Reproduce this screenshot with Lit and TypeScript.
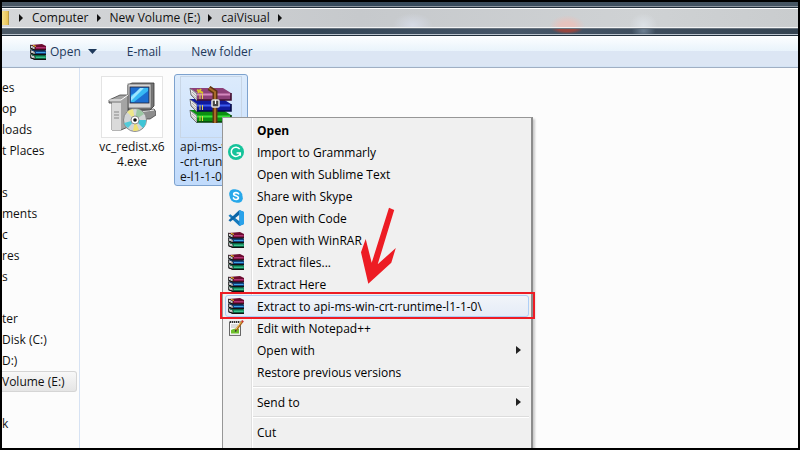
import { LitElement, html, css, svg, nothing } from "lit";
import { customElement, property } from "lit/decorators.js";

const smallBook = (y: number, cover: string, light: string) => svg`
  <path d="M.5 ${y} L5 ${y + 2} V${y + 5.2} L.5 ${y + 3.2}Z" fill="#fff" stroke="#111" stroke-width=".8"/>
  <path d="M1 ${y + 1.8} L5 ${y + 3.6}" stroke="#555" stroke-width=".5"/>
  <path d="M.5 ${y} L12 ${y - 1} L16 ${y + 1} V${y + 5} H5 V${y + 2}Z" fill="${cover}"/>
  <path d="M6 ${y + 2.8} H15.6" stroke="${light}" stroke-width="1"/>
  <path d="M.5 ${y + 3.4} L5 ${y + 5} H16" fill="none" stroke="#111" stroke-width="1.2"/>`;

const bigBook = (y: number, c: string, l: string, d: string) => svg`
  <path d="M1 ${y} L8 ${y + 6} V${y + 13} L2 ${y + 7}Z" fill="#e8e8e8" stroke="#555" stroke-width=".8"/>
  <path d="M3 ${y + 4} L8 ${y + 9} M2 ${y + 6} L8 ${y + 11}" stroke="#999" stroke-width=".7"/>
  <path d="M1 ${y} H34 L42 ${y + 5} V${y + 12} H8 V${y + 5}Z" fill="${c}"/>
  <path d="M8 ${y + 6.5} H42" stroke="${l}" stroke-width="2"/>
  <path d="M8 ${y + 12} H42 V${y + 5}" fill="none" stroke="${d}" stroke-width="1.6"/>
  <path d="M11 ${y + 6} V${y + 11} M13.5 ${y + 6} V${y + 11}" stroke="#e7d34a" stroke-width="1"/>`;

const icons = {
  rar: svg`${smallBook(10.4, "#0b7a52", "#4fe0a4")}${smallBook(5.7, "#12407c", "#3da4e4")}${smallBook(1, "#6d0b30", "#d04590")}<path d="M3 1.4 L6 2.4" stroke="#e8c91e"/>`,
  grammarly: svg`<circle cx="8" cy="8" r="8" fill="#15c39a"/><path d="M11.7 5.2 A4.6 4.6 0 1 0 12.2 9.4 M8.6 8.9 H12.3 V11.8" fill="none" stroke="#fff" stroke-width="1.5"/>`,
  skype: svg`<circle cx="5.8" cy="5.8" r="4.6" fill="#28a8ea"/><circle cx="10.2" cy="10.2" r="4.6" fill="#28a8ea"/><circle cx="8" cy="8" r="6.4" fill="#28a8ea"/><path d="M10.6 5.8 C9.8 4.3 5.7 4.2 5.7 6.2 C5.7 8.2 10.4 7.4 10.4 9.8 C10.4 12 6.2 12 5.4 10" fill="none" stroke="#fff" stroke-width="1.7" stroke-linecap="round"/>`,
  code: svg`<path d="M11.4 0 L16 2 V14 L11.4 16 L0.5 5.8 L2.3 4.3 L11.4 11.3Z" fill="#1479bd"/><path d="M11.4 0 V4.7 L2.3 11.8 L.5 10.3Z" fill="#0b65a7"/><path d="M11.4 0 L16 2 V14 L11.4 16Z" fill="#2aa2ea"/>`,
  notepad: svg`<rect x="1.5" y="2" width="11" height="13.4" fill="#fbfbfb" stroke="#666"/><path d="M2 2 H12" stroke="#333" stroke-width="2" stroke-dasharray="1 1"/><path d="M3 5 H10 M3 7 H9" stroke="#bbb"/><path d="M3 10 Q7 7.5 11 9 V13.5 H3Z" fill="#6fc02c"/><path d="M14.2 1.6 L8 10.2" stroke="#a8621c" stroke-width="2.2"/><path d="M13.8 1.2 L7.8 9.4" stroke="#ffd45a" stroke-width=".9"/><path d="M13.6 .6 L15.4 2" stroke="#c33" stroke-width="1.6"/><path d="M6.8 12 L7.2 9.6 L9 10.9Z" fill="#333"/>`,
};
type IconName = keyof typeof icons;
const icon = (name: IconName) =>
  html`<svg class="icon" viewBox="0 0 16 16" width="16" height="16" aria-hidden="true">${icons[name]}</svg>`;

const archiveArt = html`<svg viewBox="0 0 44 38" width="44" height="38" aria-hidden="true">
  ${bigBook(24, "#0c8f10", "#3be03a", "#063f08")}
  ${bigBook(13, "#101a9c", "#3d5cf0", "#050a44")}
  ${bigBook(2, "#8c3f78", "#d487bd", "#40102f")}
  <path d="M8 4 L14 7 M12 3 L9 7" stroke="#d8c22c" stroke-width="2"/>
  <path d="M20 2 L26 6 V37" fill="none" stroke="#5e3510" stroke-width="5"/>
  <path d="M20 2 L26 6 V37" fill="none" stroke="#a86a28" stroke-width="2"/>
  <rect x="23" y="14" width="7" height="7" rx="1" fill="#444" stroke="#ddd" stroke-width="1.6"/>
  <path d="M26.5 14 V18" stroke="#fff" stroke-width="1.2"/>
</svg>`;

const installerArt = html`<svg viewBox="0 0 48 50" width="48" height="50" aria-hidden="true">
  <path d="M20 31 L46 27 L48 30 V33 L42 37 H20Z" fill="#8d8d8d" stroke="#444" stroke-width=".8"/>
  <path d="M21 31 L46 28" stroke="#f4f4f4"/>
  <path d="M20 3 L24 1 H46 V24 L42 28 H20Z" fill="#777" stroke="#333" stroke-width=".8"/>
  <rect x="20" y="2" width="23" height="24" fill="#d5d5d5" stroke="#666" stroke-width=".8"/>
  <rect x="22" y="5" width="19" height="16" fill="#1d6fd1" stroke="#223" stroke-width=".8"/>
  <path d="M23 20 V13 L36 6 H40 V9 L26 20Z" fill="#37baf4"/>
  <path d="M23 15 L32 6 H36 L23 19Z" fill="#9be6ff"/>
  <path d="M1 18 L12 13 H20 V45 L13 48 H4 V21 H1Z" fill="#a4a4a4" stroke="#444" stroke-width=".8"/>
  <path d="M4 21 H13 V48 H4Z" fill="#dadada"/><path d="M1 18 H13 L20 13" fill="none" stroke="#fff"/>
  <path d="M6 30 H11 M6 33 H11 M6 36 H11" stroke="#888"/>
  <circle cx="27" cy="38" r="11.5" fill="#d2d5d6" stroke="#777" stroke-width=".8"/>
  <path d="M27 38 L19 30 A11 11 0 0 1 25 27Z" fill="#eee78a"/>
  <path d="M27 38 L29 27 A11 11 0 0 1 36 32Z" fill="#9cc9a4"/>
  <path d="M27 38 L38 38 A11 11 0 0 1 35 46Z" fill="#3fc5d6"/>
  <path d="M27 38 L16 41 A11 11 0 0 0 20 46Z" fill="#52cbd9"/>
  <path d="M27 38 L25 49 A11 11 0 0 0 31 48Z" fill="#efe16f"/>
  <circle cx="27" cy="38" r="4" fill="#fff" stroke="#777" stroke-width=".8"/><circle cx="27" cy="38" r="1.8" fill="#111"/>
</svg>`;

@customElement("path-bar")
class PathBar extends LitElement {
  static styles = css`
    :host { display: block; }
    .bar {
      display: flex; align-items: center; height: 18px;
      border-top: 1px solid #fff; border-bottom: 1px solid #f2f3f4;
      background:
        radial-gradient(ellipse 18px 12px at 71% 100%, #e6c3be 40%, #e6c3be00),
        radial-gradient(ellipse 14px 12px at 80.6% 90%, #dce1e6, #dce1e600),
        radial-gradient(ellipse 20px 12px at 51.6% 90%, #d5dae5, #d5dae500),
        linear-gradient(90deg, #d5d7d9, #c6c9cc 45%, #cfd2d4 80%, #c9ccce);
    }
    .under { height: 7px; box-sizing: border-box; border-top: 1px solid #69747f; border-bottom: 1px solid #b9c2cc;
      background:
        radial-gradient(ellipse 16px 5px at 71% 0, #96463f 50%, #96463f00),
        radial-gradient(ellipse 12px 8px at 80.6% 40%, #6d8093, #6d809300),
        linear-gradient(90deg, #4b5966, #334556 40%, #465668 65%, #344351); }
    .rule { height: 1px; background: #1f2d3a; }
    .top { height: 4px; background: linear-gradient(90deg, #4a5865, #34485a 45%, #465563); border-bottom: 1px solid #8d96a0; }
    .folder { flex: none; width: 7px; height: 14px; background: linear-gradient(90deg, #f4df8d, #e8c153); border-right: 1px solid #b89b45; box-sizing: border-box; }
    .crumb { border: 0; background: none; padding: 0 0 0 9px; font: inherit; color: #111; line-height: 18px; white-space: nowrap; }
    .arrow { flex: none; margin-left: 10px; }
    .crumb + .arrow { margin-left: 8px; }
  `;
  render() {
    const arrow = html`<svg class="arrow" width="4" height="8" viewBox="0 0 4 8" aria-hidden="true"><path d="M0 0 L4 4 L0 8Z" fill="#111"/></svg>`;
    return html`<div class="top"></div><div class="rule"></div>
      <nav class="bar" aria-label="Path"><span class="folder"></span>${arrow}
        ${["Computer", "New Volume (E:)", "caiVisual"].map((c) => html`<button class="crumb">${c}</button>${arrow}`)}
      </nav>
      <div class="under"></div><div class="rule"></div>`;
  }
}

interface Entry { label: string; icon?: IconName; bold?: boolean; more?: boolean; marked?: boolean; rule?: boolean; }
const entries: Entry[] = [
  { label: "Open", bold: true },
  { label: "Import to Grammarly", icon: "grammarly" },
  { label: "Open with Sublime Text" },
  { label: "Share with Skype", icon: "skype" },
  { label: "Open with Code", icon: "code" },
  { label: "Open with WinRAR", icon: "rar" },
  { label: "Extract files...", icon: "rar" },
  { label: "Extract Here", icon: "rar" },
  { label: "Extract to api-ms-win-crt-runtime-l1-1-0\\", icon: "rar", marked: true },
  { label: "Edit with Notepad++", icon: "notepad" },
  { label: "Open with", more: true },
  { label: "Restore previous versions" },
  { label: "Send to", more: true, rule: true },
  { label: "Cut", rule: true },
];

@customElement("context-menu")
class ContextMenu extends LitElement {
  static styles = css`
    :host {
      display: block; box-sizing: border-box; width: 311px; padding: 1px 2px 0;
      border: 1px solid #979797; border-right: 2px solid #8c8c8c; border-bottom: 0;
      background: linear-gradient(90deg, #f1f1f1 28px, #dfdfdf 28px, #dfdfdf 29px, #fff 29px, #fff 30px, #f0f0f0 30px);
      box-shadow: 2px 2px 2px #0003;
    }
    .item {
      position: relative; display: grid; grid-template-columns: 29px 1fr 12px; align-items: center;
      width: 100%; height: 22px; box-sizing: border-box; padding: 0 0 0 2px; border: 1px solid transparent;
      border-radius: 3px; background: none; font: inherit; color: #000; text-align: left; white-space: nowrap;
    }
    .icon, .more { display: block; }
    .bold { font-weight: 700; }
    .marked { border-color: #aecff7; background: linear-gradient(#f1f4f9, #e5ecf7); }
    .frame { position: absolute; inset: -4px -7px -3px -6px; border: 2px solid #ed1c24; }
    .rule { height: 1px; margin: 3px 0 3px 28px; border: 0; border-bottom: 1px solid #fff; background: #dcdcdc; }
  `;
  render() {
    return entries.map((e) => html`
      ${e.rule ? html`<hr class="rule" />` : nothing}
      <button class="item ${e.bold ? "bold" : ""} ${e.marked ? "marked" : ""}" role="menuitem">
        <span>${e.icon ? icon(e.icon) : nothing}</span><span>${e.label}</span>
        ${e.more ? html`<svg class="more" width="5" height="8" viewBox="0 0 5 8" aria-hidden="true"><path d="M0 0 L5 4 L0 8Z" fill="#222"/></svg>` : nothing}
        ${e.marked ? html`<span class="frame"></span>` : nothing}
      </button>`);
  }
}

@customElement("file-tile")
class FileTile extends LitElement {
  @property() lines = "";
  @property({ type: Boolean }) selected = false;
  static styles = css`
    :host { display: block; }
    .tile {
      display: flex; flex-direction: column; align-items: center; width: 74px; height: 112px; padding: 1px 0 0;
      border: 1px solid transparent; border-radius: 3px; background: none; color: #111; font: inherit; box-sizing: border-box;
    }
    .selected { border-color: #7da2ce; background: linear-gradient(#dcebfc, #c1dbfc); }
    .thumb { display: grid; place-items: center; width: 62px; height: 62px; box-sizing: border-box; border: 1px solid #e4e4e4; background: #fff; }
    .selected .thumb { border-color: #c8d6e6; background: none; place-items: start center; padding-top: 9px; }
    .name { margin-top: 1px; line-height: 15px; white-space: pre; text-align: center; }
    .selected .name { width: 62px; text-align: left; }
  `;
  render() {
    return html`<button class="tile ${this.selected ? "selected" : ""}">
      <span class="thumb"><slot></slot></span><span class="name">${this.lines}</span>
    </button>`;
  }
}

@customElement("app-root")
class AppRoot extends LitElement {
  static styles = css`
    :host {
      position: relative; display: flex; flex-direction: column; height: 100vh; box-sizing: border-box;
      border: 2px solid #000; overflow: hidden; background: #fcfcfc;
      font: 12px/15px "Open Sans", "Noto Sans", sans-serif; color: #111;
    }
    .toolbar {
      display: flex; align-items: center; gap: 30px; height: 32px; box-sizing: border-box; padding-left: 28px; flex: none;
      border-bottom: 1px solid #a0afc3; box-shadow: inset 0 -1px #d4e4f5;
      background: linear-gradient(#fdfeff, #e8f3fb 50%, #dce6f4 50%, #dce6f4);
    }
    .tool { display: flex; align-items: center; gap: 4px; padding: 0; border: 0; background: none; font: inherit; color: #1e395b; }
    .caret { margin-left: 3px; }
    .main { display: flex; flex: 1; min-height: 0; }
    .side { width: 78px; flex: none; box-sizing: border-box; padding-top: 9px; border-right: 1px solid #d6e2f3; }
    .place { display: block; height: 21px; line-height: 21px; box-sizing: border-box; color: #111; text-decoration: none; white-space: nowrap; }
    .current { margin-right: 2px; line-height: 19px; border: 1px solid #d5d5d5; border-left: 0; border-radius: 0 3px 3px 0; background: linear-gradient(#f8f8f8, #e5e5e5); }
    .files { display: flex; gap: 5px; padding: 6px 0 0 15px; }
    .menu { position: absolute; top: 115px; left: 220px; bottom: 0; }
    .pointer { position: absolute; top: 205px; left: 358px; }
  `;
  render() {
    const places = ["es", "op", "loads", "t Places", "", "s", "ments", "c", "res", "s", "", "ter", "Disk (C:)", "D:)", "Volume (E:)", "", "k"];
    return html`
      <path-bar></path-bar>
      <div class="toolbar">
        <button class="tool">${icon("rar")}Open<svg class="caret" width="9" height="5" viewBox="0 0 9 5" aria-hidden="true"><path d="M0 0 H9 L4.5 5Z" fill="#1e395b"/></svg></button>
        <button class="tool">E-mail</button>
        <button class="tool">New folder</button>
      </div>
      <div class="main">
        <nav class="side" aria-label="Places">
          ${places.map((p) => p
            ? html`<a href="#" class="place ${p.startsWith("Volume") ? "current" : ""}">${p}</a>`
            : html`<div class="place"></div>`)}
        </nav>
        <div class="files">
          <file-tile .lines=${"vc_redist.x6\n4.exe"}>${installerArt}</file-tile>
          <file-tile selected .lines=${"api-ms-win\n-crt-runtim\ne-l1-1-0"}>${archiveArt}</file-tile>
        </div>
      </div>
      <context-menu class="menu" role="menu"></context-menu>
      <svg class="pointer" width="40" height="80" viewBox="360 207 40 80" aria-hidden="true">
        <path d="M389 207.7 L394.2 210 L377.7 264.3 L395.8 248 L391.3 262.7 L368.3 283.8 L361 252.3 L365.7 239 L371.7 262.7Z" fill="#ed1c24"/>
      </svg>`;
  }
}
